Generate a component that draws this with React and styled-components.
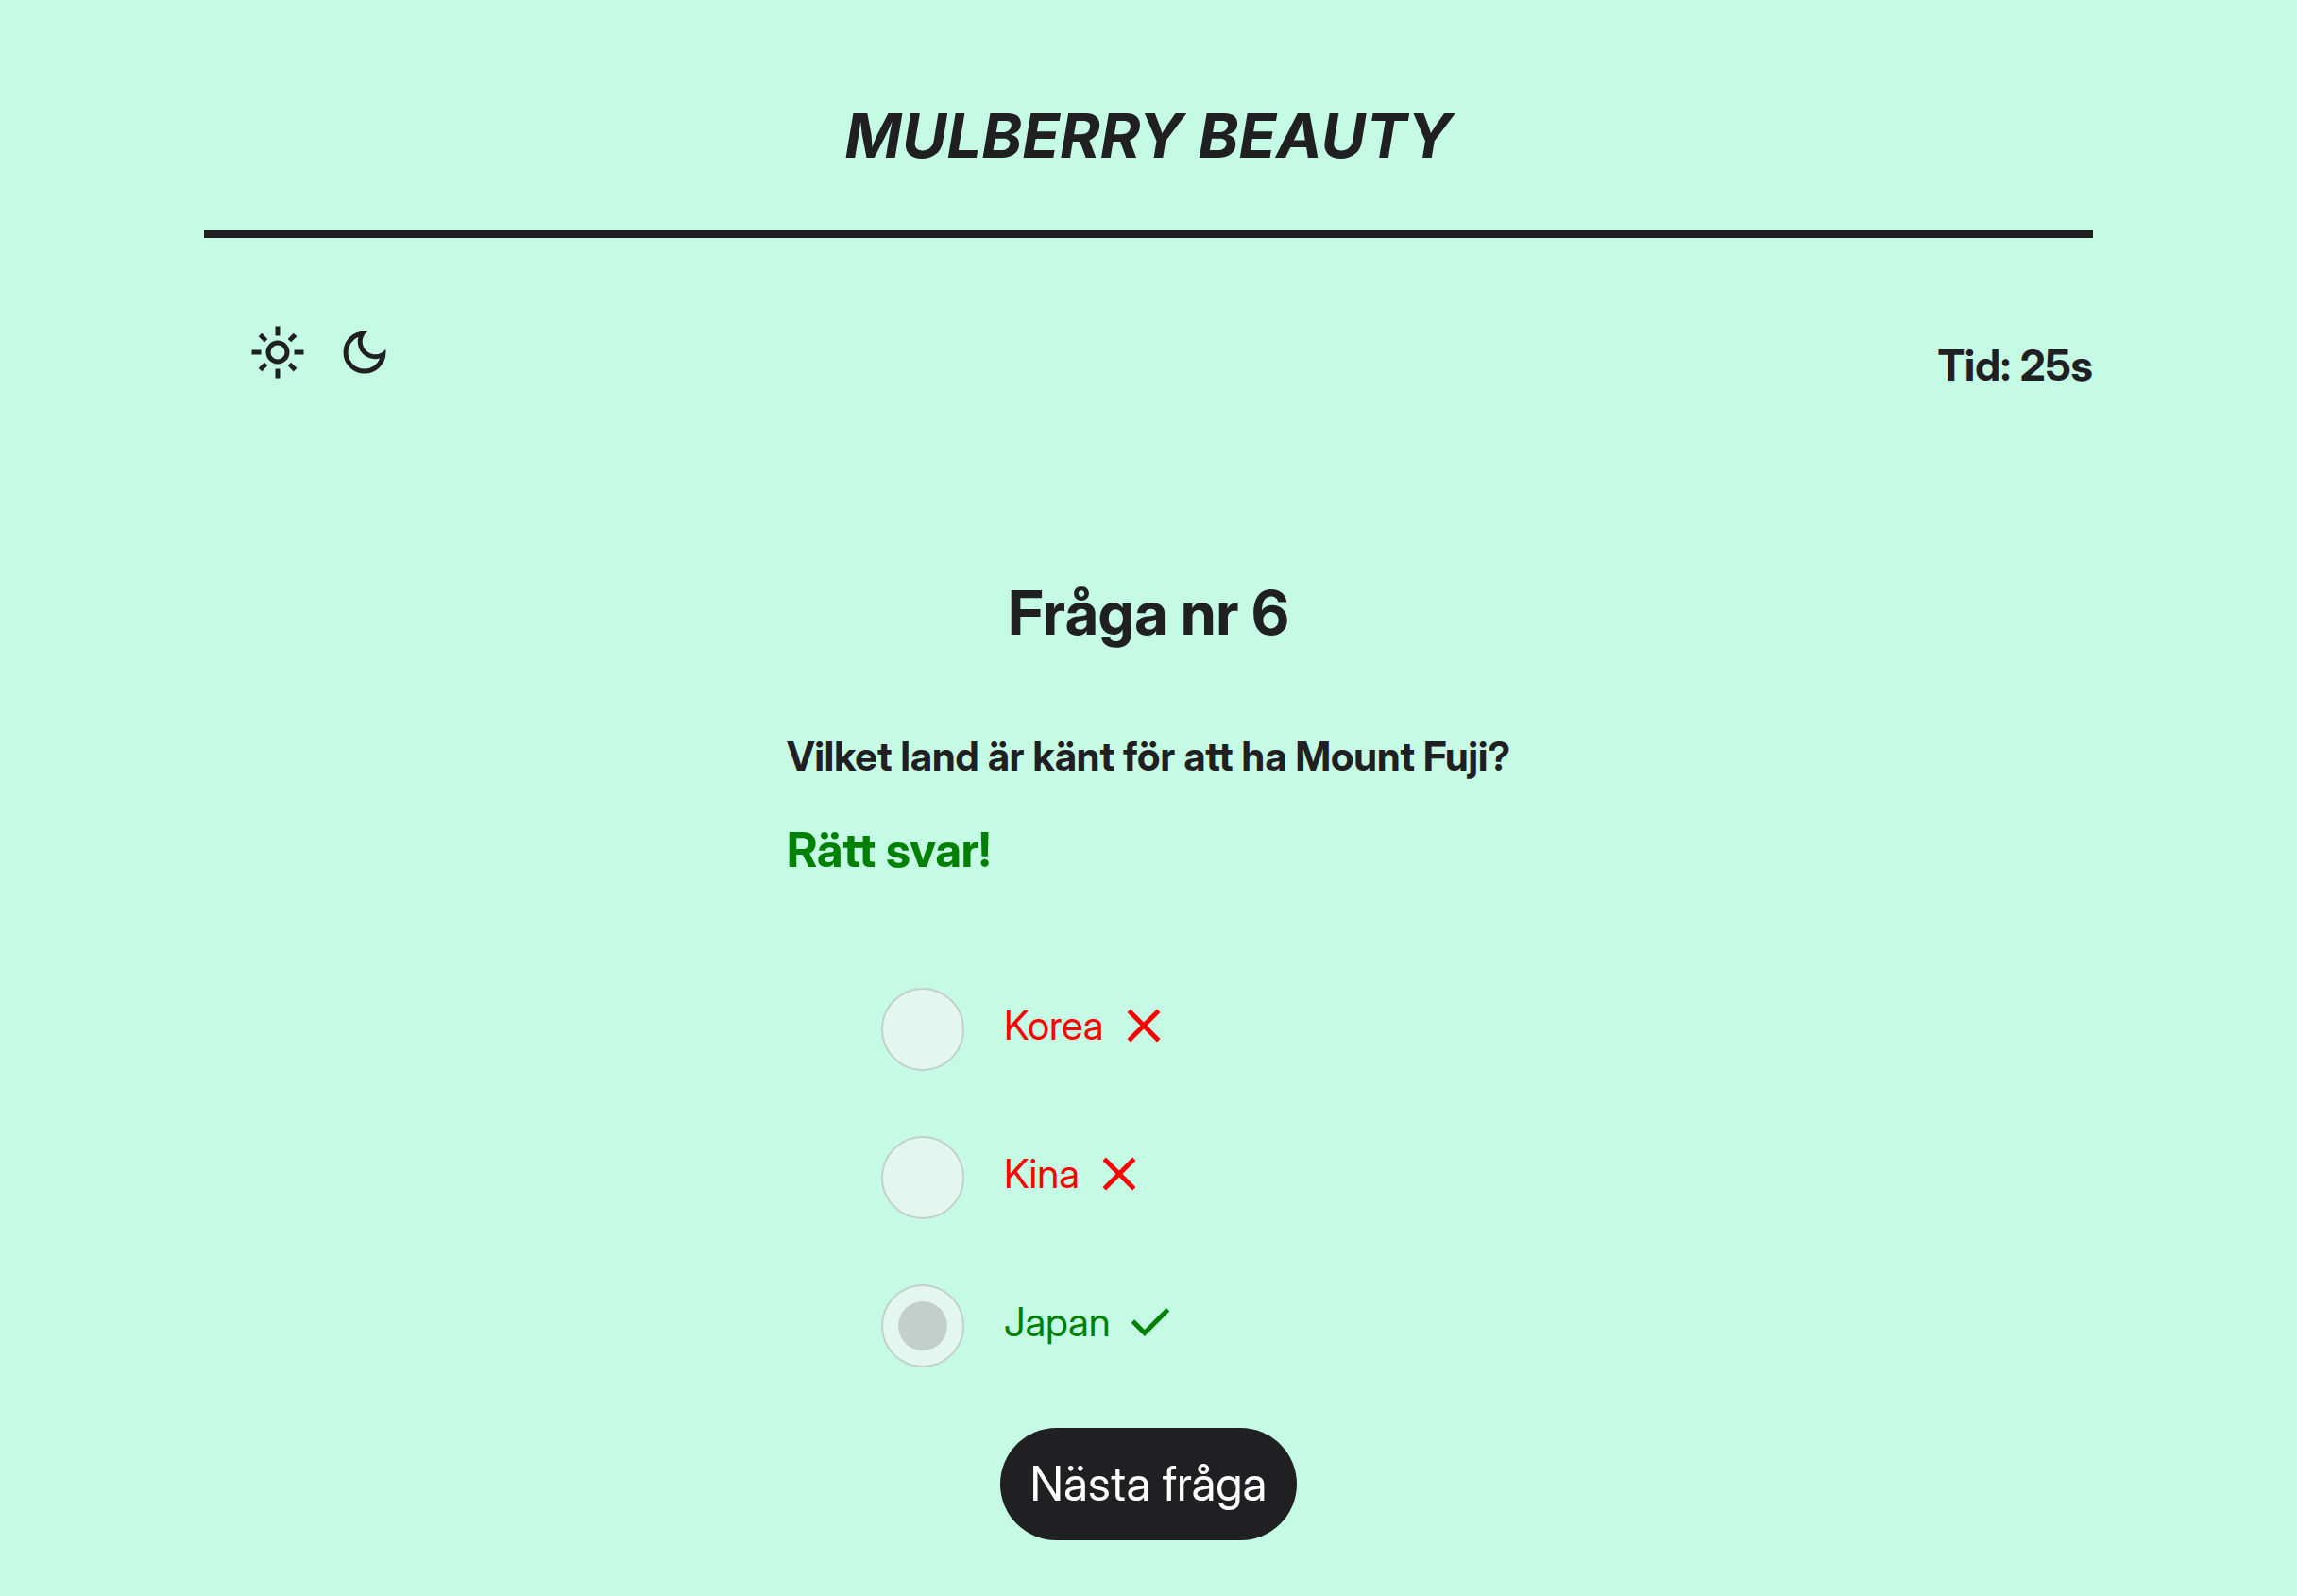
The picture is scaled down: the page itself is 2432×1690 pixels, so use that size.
import React, { useState } from "react";
import styled, { createGlobalStyle } from "styled-components";

const GlobalStyle = createGlobalStyle`
  *, *::before, *::after {
    box-sizing: border-box;
  }
  body {
    margin: 0;
    background: #c5fbe5;
    color: #202022;
    font-family: "Inter Display", Inter, "Liberation Sans", sans-serif;
  }
`;

const Page = styled.div`
  width: calc(100% - 96px);
  max-width: 2000px;
  min-height: 100vh;
  margin: 0 auto;
  padding-bottom: 56px;
`;

const Header = styled.header`
  padding: 104px 0 60px;
  border-bottom: 8px solid #202022;
  text-align: center;
`;

const SiteTitle = styled.h1`
  margin: 0;
  font-family: Inter, "Liberation Sans", sans-serif;
  font-size: 65px;
  line-height: 80px;
  font-weight: 700;
  font-style: italic;
`;

const Toolbar = styled.div`
  display: flex;
  justify-content: space-between;
  align-items: flex-start;
  padding: 91px 0 0 48px;
`;

const ThemeButtons = styled.div`
  display: flex;
  gap: 32px;
`;

const IconButton = styled.button`
  display: flex;
  padding: 0;
  border: 0;
  background: none;
  color: inherit;
  cursor: pointer;
`;

const Glyph = styled.svg`
  display: block;
  flex: none;
  width: 60px;
  height: 60px;
  fill: currentColor;
`;

const Timer = styled.p`
  margin: 16px 0 0;
  font-size: 45px;
  line-height: 56px;
  font-weight: 700;
`;

const Quiz = styled.main`
  display: flex;
  flex-direction: column;
  align-items: center;
  padding-top: 194px;
`;

const QuestionNumber = styled.h2`
  margin: 0 0 88px;
  font-size: 64px;
  line-height: 80px;
  font-weight: 700;
`;

const QuestionBlock = styled.section`
  display: flex;
  flex-direction: column;
`;

const QuestionText = styled.h3`
  margin: 0 0 45px;
  font-size: 42px;
  line-height: 48px;
  font-weight: 700;
`;

const Feedback = styled.p`
  margin: 0;
  color: #008000;
  font-size: 50px;
  line-height: 60px;
  font-weight: 700;
`;

const Options = styled.div`
  display: flex;
  flex-direction: column;
  gap: 69px;
  padding: 116px 0 64px 100px;
`;

const Option = styled.div`
  display: flex;
  align-items: flex-start;
  gap: 42px;
`;

const Radio = styled.input`
  appearance: none;
  display: grid;
  place-items: center;
  flex: none;
  width: 88px;
  height: 88px;
  margin: 0;
  border: 2px solid #c3cfca;
  border-radius: 50%;
  background: #e3f7f0;

  &:checked::before {
    content: "";
    width: 52px;
    height: 52px;
    border-radius: 50%;
    background: #c3cfca;
  }
`;

const OptionLabel = styled.label`
  display: flex;
  align-items: center;
  gap: 12px;
  height: 80px;
  color: ${({ $correct }) => ($correct ? "#008000" : "#ff0000")};
  font-size: 42px;
  line-height: 48px;
`;

const NextButton = styled.button`
  padding: 28px 32px;
  border: 0;
  border-radius: 60px;
  background: #202022;
  color: #ffffff;
  font-family: inherit;
  font-size: 50px;
  line-height: 63px;
  cursor: pointer;
`;

const icons = {
  sun: "M12 15q1.25 0 2.125-.875T15 12q0-1.25-.875-2.125T12 9q-1.25 0-2.125.875T9 12q0 1.25.875 2.125T12 15m0 2q-2.075 0-3.537-1.463T7 12q0-2.075 1.463-3.537T12 7q2.075 0 3.538 1.463T17 12q0 2.075-1.463 3.538T12 17M5 13H1v-2h4zm18 0h-4v-2h4zM11 5V1h2v4zm0 18v-4h2v4zM6.4 7.75 3.875 5.325 5.3 3.85l2.4 2.5zm12.3 12.4-2.425-2.525L17.6 16.25l2.525 2.425zM16.25 6.4l2.425-2.525L20.15 5.3l-2.5 2.4zM3.85 18.7l2.525-2.425L7.75 17.6l-2.425 2.525z",
  moon: "M12 21q-3.75 0-6.375-2.625T3 12q0-3.75 2.625-6.375T12 3q.35 0 .688.025t.662.075q-1.025.725-1.637 1.888T11.1 7.5q0 2.25 1.575 3.825T16.5 12.9q1.375 0 2.525-.613T20.9 10.65q.05.325.075.662T21 12q0 3.75-2.625 6.375T12 21m0-2q2.2 0 3.95-1.213t2.55-3.162q-.5.125-1 .2t-1 .075q-3.075 0-5.238-2.163T9.1 7.5q0-.5.075-1t.2-1q-1.95.8-3.163 2.55T5 12q0 2.9 2.05 4.95T12 19",
  cross: "M6.4 19 5 17.6l5.6-5.6L5 6.4 6.4 5l5.6 5.6L17.6 5 19 6.4 13.4 12l5.6 5.6-1.4 1.4-5.6-5.6z",
  check: "M9.55 18l-5.7-5.7 1.425-1.425L9.55 15.15l9.175-9.175L20.15 7.4z",
};

const Icon = ({ name }) => (
  <Glyph viewBox="0 0 24 24" aria-hidden="true">
    <path d={icons[name]} />
  </Glyph>
);

const answers = [
  { id: "korea", text: "Korea", correct: false },
  { id: "kina", text: "Kina", correct: false },
  { id: "japan", text: "Japan", correct: true },
];

export default function App() {
  const [selected] = useState("japan");

  return (
    <>
      <GlobalStyle />
      <Page>
        <Header>
          <SiteTitle>MULBERRY BEAUTY</SiteTitle>
        </Header>
        <Toolbar>
          <ThemeButtons>
            <IconButton type="button" aria-label="Ljust tema">
              <Icon name="sun" />
            </IconButton>
            <IconButton type="button" aria-label="Mörkt tema">
              <Icon name="moon" />
            </IconButton>
          </ThemeButtons>
          <Timer>Tid: 25s</Timer>
        </Toolbar>
        <Quiz>
          <QuestionNumber>Fråga nr 6</QuestionNumber>
          <QuestionBlock>
            <QuestionText id="question">Vilket land är känt för att ha Mount Fuji?</QuestionText>
            <Feedback>Rätt svar!</Feedback>
            <Options role="radiogroup" aria-labelledby="question">
              {answers.map(({ id, text, correct }) => (
                <Option key={id}>
                  <Radio
                    type="radio"
                    name="answer"
                    id={id}
                    value={id}
                    defaultChecked={id === selected}
                    disabled
                  />
                  <OptionLabel htmlFor={id} $correct={correct}>
                    {text}
                    <Icon name={correct ? "check" : "cross"} />
                  </OptionLabel>
                </Option>
              ))}
            </Options>
          </QuestionBlock>
          <NextButton type="button">Nästa fråga</NextButton>
        </Quiz>
      </Page>
    </>
  );
}
